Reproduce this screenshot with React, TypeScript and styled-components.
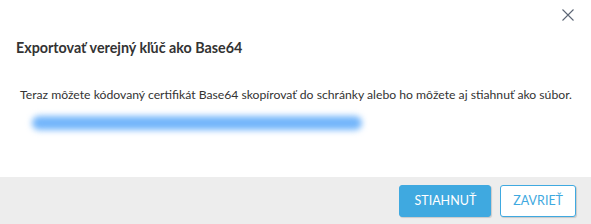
import styled, { createGlobalStyle } from "styled-components";

const GlobalStyle = createGlobalStyle`
    html, body {
        margin: 0;
        padding: 0;
        background: #ffffff;
    }
    body {
        font-family: Lato, "Open Sans", sans-serif;
        color: #333333;
    }
`;

const Dialog = styled.div`
    width: 591px;
    height: 224px;
    display: flex;
    flex-direction: column;
    background: #ffffff;
    position: relative;
`;

const CloseButton = styled.button`
    position: absolute;
    top: 9px;
    right: 17px;
    width: 12px;
    height: 12px;
    padding: 0;
    border: none;
    background: transparent;
    cursor: pointer;
    display: flex;
`;

const Body = styled.div`
    flex: 1;
    padding: 38px 16px 0 16px;
`;

const Title = styled.h2`
    margin: 0;
    font-size: 14.3px;
    font-weight: 700;
    line-height: 19px;
    color: #333333;
`;

const Message = styled.p`
    margin: 29px 0 0 4px;
    font-size: 12.2px;
    line-height: 18px;
    white-space: nowrap;
    color: #333333;
`;

const KeyValue = styled.div`
    margin: 12px 0 0 16px;
    width: 330px;
    height: 14px;
    border-radius: 7px;
    background: #74b6fb;
    filter: blur(3px);
`;

const Footer = styled.div`
    height: 47px;
    background: #ededed;
    display: flex;
    justify-content: flex-end;
    align-items: center;
    gap: 9px;
    padding: 0 15px;
`;

const Button = styled.button<{ $primary?: boolean }>`
    height: 32px;
    padding: 0 ${(p) => (p.$primary ? "14px" : "12px")};
    border-radius: 3px;
    font-family: Lato, "Open Sans", sans-serif;
    font-size: 12.5px;
    text-transform: uppercase;
    cursor: pointer;
    border: 1px solid #3fa9e0;
    background: ${(p) => (p.$primary ? "#3fa9e0" : "#ffffff")};
    color: ${(p) => (p.$primary ? "#ffffff" : "#3fa9e0")};
    box-shadow: 1px 1px 1px rgba(0, 0, 0, 0.15);
`;

export default function App() {
    return (
        <>
            <GlobalStyle />
            <Dialog>
                <CloseButton aria-label="Zavrieť">
                    <svg width="12" height="12" viewBox="0 0 12 12">
                        <path d="M0.5 0.5 L11.5 11.5 M11.5 0.5 L0.5 11.5" stroke="#5c6675" strokeWidth="1.1" />
                    </svg>
                </CloseButton>
                <Body>
                    <Title>Exportovať verejný kľúč ako Base64</Title>
                    <Message>
                        Teraz môžete kódovaný certifikát Base64 skopírovať do schránky alebo ho môžete aj stiahnuť ako súbor.
                    </Message>
                    <KeyValue />
                </Body>
                <Footer>
                    <Button $primary>Stiahnuť</Button>
                    <Button>Zavrieť</Button>
                </Footer>
            </Dialog>
        </>
    );
}
